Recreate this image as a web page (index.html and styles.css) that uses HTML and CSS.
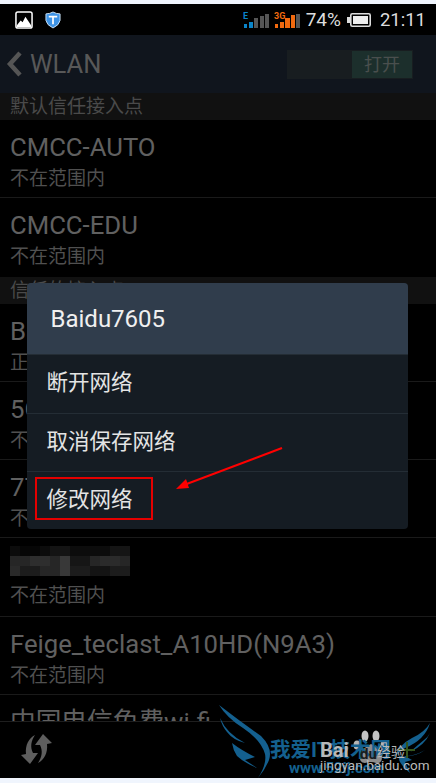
FILE: index.html
```html
<!DOCTYPE html>
<html lang="en">
<head>
  <meta charset="UTF-8" />
  <meta name="viewport" content="width=device-width, initial-scale=1.0" />
  <title>WLAN</title>
  <link rel="stylesheet" href="styles.css">
</head>
<body>
  <div id="phone">
    <div class="status">
      <svg class="status-icon" width="18" height="18" viewBox="0 0 19 19">
        <rect x="1" y="1" width="17" height="17" rx="2" fill="#000" stroke="#fff" stroke-width="1.6"/>
        <path d="M2 17 L2 15 L6 10 L8 12 L11 6 L17 15 L17 17 Z" fill="#fff"/>
      </svg>
      <svg class="status-icon shield" width="16" height="18" viewBox="0 0 17 19">
        <path d="M1 3 Q5 3 8.500 1 Q12 3 16 3 L16 10 Q15 15 8.500 18 Q2 15 1 10 Z" fill="#3d93e6" stroke="#cfe3f5"/>
        <path d="M4 6 H13 M8.500 6 V14" stroke="#fff" stroke-width="1.800" fill="none"/>
      </svg>
      <div class="status-right">
        <svg width="27" height="20" viewBox="0 0 27 20">
          <text x="0" y="9" class="net-label net-e">E</text>
          <rect x="1" y="14" width="3" height="4" fill="#0a84c8"/>
          <rect x="6" y="12" width="4" height="6" fill="#0a84c8"/>
          <rect x="11" y="8" width="4" height="10" fill="#555"/>
          <rect x="17" y="6" width="4" height="12" fill="#555"/>
          <rect x="22" y="4" width="4" height="14" fill="#555"/>
        </svg>
        <svg class="net-second" width="27" height="20" viewBox="0 0 27 20">
          <text x="0" y="9" class="net-label net-3g">3G</text>
          <rect x="1" y="14" width="3" height="4" fill="#f26a0f"/>
          <rect x="6" y="12" width="4" height="6" fill="#f26a0f"/>
          <rect x="11" y="8" width="5" height="10" fill="#f26a0f"/>
          <rect x="17" y="5" width="4" height="13" fill="#f26a0f"/>
          <rect x="22" y="4" width="4" height="14" fill="#555"/>
        </svg>
        <span class="pct">74%</span>
        <svg class="battery" width="24" height="14" viewBox="0 0 24 14">
          <rect x="0" y="4" width="3" height="6" fill="#ddd"/>
          <rect x="3.800" y="0.800" width="19.400" height="12.400" rx="1.500" fill="#000" stroke="#ddd" stroke-width="1.600"/>
          <rect x="6" y="3" width="15" height="8" fill="#eee"/>
        </svg>
        <span class="clock">21:11</span>
      </div>
    </div>

    <div class="action-bar">
      <svg class="back" width="16" height="26" viewBox="0 0 16 26">
        <path d="M14 2 L4 13 L14 24" fill="none" stroke="#555" stroke-width="4.500"/>
      </svg>
      <span class="screen-title">WLAN</span>
      <div class="toggle"><span class="toggle-on">打开</span></div>
    </div>

    <div class="list">
      <div class="section">默认信任接入点</div>
      <div class="row">
        <div class="row-title">CMCC-AUTO</div>
        <div class="row-sub">不在范围内</div>
      </div>
      <div class="row row-end">
        <div class="row-title">CMCC-EDU</div>
        <div class="row-sub">不在范围内</div>
      </div>
      <div class="section">信任的接入点</div>
      <div class="row">
        <div class="row-title">Baidu7605</div>
        <div class="row-sub">正在连接</div>
      </div>
      <div class="row">
        <div class="row-title">5G</div>
        <div class="row-sub">不在范围内</div>
      </div>
      <div class="row">
        <div class="row-title">77</div>
        <div class="row-sub">不在范围内</div>
      </div>
      <div class="row">
        <svg class="mosaic" width="120" height="30" viewBox="0 0 12 3" shape-rendering="crispEdges">
          <rect width="12" height="1" y="0" fill="#0c0c0c"/>
          <rect width="12" height="1" y="1" fill="#262626"/>
          <rect width="12" height="1" y="2" fill="#1c1c1c"/>
          <rect x="1" y="0" width="2" height="1" fill="#060606"/>
          <rect x="4" y="0" width="2" height="1" fill="#141414"/>
          <rect x="10" y="0" width="2" height="1" fill="#151515"/>
          <rect x="2" y="1" width="2" height="1" fill="#2e2e2e"/>
          <rect x="5" y="1" width="1" height="2" fill="#383838"/>
          <rect x="6" y="1" width="2" height="1" fill="#161616"/>
          <rect x="9" y="1" width="2" height="1" fill="#2b2b2b"/>
          <rect x="0" y="2" width="1" height="1" fill="#2a2a2a"/>
          <rect x="3" y="2" width="2" height="1" fill="#262626"/>
          <rect x="8" y="2" width="2" height="1" fill="#141414"/>
        </svg>
        <div class="row-sub">不在范围内</div>
      </div>
      <div class="row">
        <div class="row-title">Feige_teclast_A10HD(N9A3)</div>
        <div class="row-sub">不在范围内</div>
      </div>
      <div class="row row-last">
        <div class="row-title">中国电信免费wi-fi</div>
      </div>
    </div>

    <div class="bottom-bar">
      <svg class="sync" width="34" height="34" viewBox="0 0 34 34">
        <path d="M23 1 L32 10 L27 11 C28 20 24 27 18 30 C22 24 23 18 20 12 L15 12 Z" fill="#5e5e5e"/>
        <path d="M23 1 L32 10 L27 11 C28 20 24 27 18 30 C22 24 23 18 20 12 L15 12 Z" fill="#5e5e5e" transform="rotate(180 16.500 16)"/>
      </svg>
    </div>

    <div class="dialog">
      <div class="dialog-title">Baidu7605</div>
      <div class="dialog-item">断开网络</div>
      <div class="dialog-item">取消保存网络</div>
      <div class="dialog-item">修改网络</div>
    </div>

    <div class="red-box"></div>
    <svg class="arrow" width="120" height="50" viewBox="0 0 120 50">
      <path d="M112 2 L14 39" stroke="#f00" stroke-width="2"/>
      <path d="M6 43 L16 33 L19 42 Z" fill="#f00"/>
    </svg>

    <div class="watermark">
      <svg class="wings" width="217" height="83" viewBox="0 0 217 83">
        <path d="M0 5 Q22 22 42 36 Q54 48 50 60 Q46 70 39 78 Q48 64 46 54 Q42 40 24 28 Q8 18 0 5 Z" fill="#14608f"/>
        <path d="M1 18 Q8 34 26 43 Q14 40 8 32 Q3 26 1 18 Z" fill="#14608f"/>
        <path d="M13 43 Q22 50 36 57 L26 60 L38 68 Q24 62 18 56 Q14 50 13 43 Z" fill="#14608f"/>
        <path d="M211 23 Q206 40 186 48 Q176 55 174 60 Q179 45 193 38 Q206 32 211 23 Z" fill="#14608f"/>
        <path d="M211 33 Q206 45 191 52 Q200 44 205 40 Q209 37 211 33 Z" fill="#14608f"/>
        <path d="M206 50 Q196 56 186 56 L193 60 L186 62 L191 73 Q178 62 180 56 Q195 58 206 50 Z" fill="#14608f"/>
        <path d="M179 50 H196 M188 42 V58" stroke="#35561f" stroke-width="2"/>
      </svg>
      <svg class="paw" width="36" height="36" viewBox="0 0 36 36">
        <ellipse cx="4" cy="15" rx="3.500" ry="4.500" fill="#b5b5b5"/>
        <ellipse cx="12" cy="6" rx="3.500" ry="5.500" fill="#c4c4c4"/>
        <ellipse cx="23" cy="6" rx="3.500" ry="5.500" fill="#c4c4c4"/>
        <ellipse cx="31" cy="15" rx="3.500" ry="4.500" fill="#b5b5b5"/>
        <path d="M18 14 Q26 17 29 27 Q29 34 23 33 Q18 31 12 33 Q6 33 7 26 Q10 17 18 14 Z" fill="#8d8d8d"/>
      </svg>
      <span class="wm-blue">我爱IT技术网</span>
      <span class="wm-url">www.52ij.com</span>
      <span class="wm-baidu">Bai</span>
      <span class="wm-du">du</span>
      <span class="wm-jy">经验</span>
      <span class="wm-jingyan">jingyan.baidu.com</span>
    </div>
  </div>
</body>
</html>
```

FILE: styles.css
```css
html, body {
  margin: 0;
  padding: 0;
}
body {
  font-family: Roboto, "Noto Sans CJK SC", sans-serif;
  background: #f0f5fd;
}
#phone {
  position: relative;
  width: 436px;
  height: 783px;
  padding: 4px 0 5px;
  box-sizing: border-box;
  display: flex;
  flex-direction: column;
  overflow: hidden;
}
.status {
  flex: 0 0 31px;
  display: flex;
  align-items: center;
  padding: 0 10px 0 15px;
  background: #000;
}
.status-icon {
  margin-right: 12px;
}
.status-right {
  margin-left: auto;
  display: flex;
  align-items: center;
  color: #ddd;
}
.net-label {
  font-size: 9px;
  font-weight: 700;
}
.net-e {
  fill: #0a84c8;
}
.net-3g {
  fill: #f26a0f;
}
.net-second {
  margin-left: 4px;
}
.pct {
  font-size: 19px;
  margin-left: 5px;
}
.battery {
  margin-left: 6px;
}
.clock {
  font-size: 18.500px;
  margin-left: 9px;
}
.action-bar {
  flex: 0 0 58px;
  display: flex;
  align-items: center;
  padding: 0 23px 0 6px;
  background: #10151d;
}
.back {
  margin-right: 8px;
}
.screen-title {
  font-size: 25.500px;
  color: #585858;
}
.toggle {
  margin-left: auto;
  width: 126px;
  height: 29px;
  background: #181d20;
  display: flex;
  justify-content: flex-end;
  padding: 1px;
  box-sizing: border-box;
}
.toggle-on {
  width: 60px;
  background: #1c2f2c;
  color: #4a4f4e;
  font-size: 18px;
  line-height: 27px;
  text-align: center;
}
.list {
  flex: 1;
  overflow: hidden;
  background: #000;
}
.section {
  height: 27px;
  line-height: 27px;
  font-size: 19px;
  padding-left: 10px;
  color: #4a4a4a;
  background: #111;
}
.row {
  height: 78.300px;
  box-sizing: border-box;
  padding: 11px 10px 0;
  border-bottom: 1px solid #1a1a1a;
}
.row-end {
  border-bottom: none;
}
.row-title {
  font-size: 25.700px;
  line-height: 33px;
  color: #606060;
  white-space: nowrap;
}
.row-sub {
  font-size: 19px;
  line-height: 27px;
  color: #505050;
  margin-top: 1px;
}
.mosaic {
  display: block;
  height: 30px;
  margin: -3px 0 6px;
  filter: blur(0.6px);
}
.bottom-bar {
  flex: 0 0 57px;
  box-sizing: border-box;
  border-top: 1px solid #1e1e1e;
  background: #000;
  display: flex;
  align-items: center;
  padding-left: 20px;
}
.sync {
  filter: blur(0.4px);
}
.dialog {
  position: absolute;
  left: 27px;
  top: 283px;
  width: 381px;
  height: 246px;
  border-radius: 4px;
  overflow: hidden;
  background: #151c23;
}
.dialog-title {
  height: 71px;
  line-height: 73px;
  padding-left: 23.500px;
  font-size: 24px;
  color: #f0f0f0;
  background: #303d4c;
}
.dialog-item {
  height: 58.500px;
  box-sizing: border-box;
  line-height: 56px;
  padding-left: 19.500px;
  font-size: 21.500px;
  color: #e4e4e4;
  border-top: 1px solid #242d35;
}
.red-box {
  position: absolute;
  left: 35px;
  top: 477px;
  width: 118px;
  height: 43px;
  box-sizing: border-box;
  border: 2px solid #e40000;
}
.arrow {
  position: absolute;
  left: 170px;
  top: 446px;
}
.watermark {
  position: absolute;
  left: 219px;
  top: 700px;
  width: 217px;
  height: 78px;
  overflow: hidden;
}
.wings {
  position: absolute;
  left: 0;
  top: 0;
}
.paw {
  position: absolute;
  left: 134px;
  top: 30px;
}
.wm-blue {
  position: absolute;
  left: 51px;
  top: 36px;
  font-size: 20.500px;
  line-height: 28px;
  font-weight: 700;
  color: #14608f;
  white-space: nowrap;
}
.wm-url {
  position: absolute;
  left: 70px;
  top: 58px;
  font-size: 15px;
  line-height: 20px;
  font-weight: 700;
  color: #14608f;
}
.wm-baidu {
  position: absolute;
  left: 101px;
  top: 38px;
  font-size: 20px;
  line-height: 24px;
  font-weight: 700;
  color: #b8b8b8;
}
.wm-du {
  position: absolute;
  left: 141px;
  top: 44px;
  font-size: 15px;
  line-height: 20px;
  font-weight: 700;
  color: #1c1c1c;
}
.wm-jy {
  position: absolute;
  left: 158px;
  top: 42px;
  font-size: 14px;
  line-height: 20px;
  color: #b8b8b8;
}
.wm-jingyan {
  position: absolute;
  left: 101px;
  top: 56px;
  font-size: 13.500px;
  line-height: 18px;
  color: #bbb;
  white-space: nowrap;
}
```
